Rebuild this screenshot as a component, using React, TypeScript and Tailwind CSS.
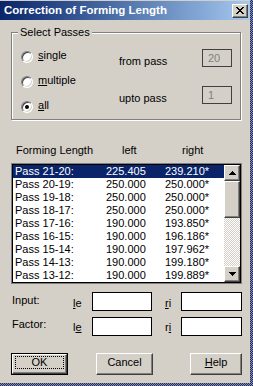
import React from "react";

const rows = [
  ["Pass 21-20:", "225.405", "239.210*"],
  ["Pass 20-19:", "250.000", "250.000*"],
  ["Pass 19-18:", "250.000", "250.000*"],
  ["Pass 18-17:", "250.000", "250.000*"],
  ["Pass 17-16:", "190.000", "193.850*"],
  ["Pass 16-15:", "190.000", "196.186*"],
  ["Pass 15-14:", "190.000", "197.962*"],
  ["Pass 14-13:", "190.000", "199.180*"],
  ["Pass 13-12:", "190.000", "199.889*"],
];

const raised =
  "bg-[#d4d0c8] border border-t-white border-l-white border-r-[#404040] border-b-[#404040] shadow-[inset_-1px_-1px_0_#808080]";

function Radio({
  pre,
  u,
  post,
  checked,
}: {
  pre: string;
  u: string;
  post: string;
  checked?: boolean;
}) {
  return (
    <div className="h-[25px] flex items-center gap-[5px]">
      <span className="mt-[2px] w-[12px] h-[12px] rounded-full bg-white border border-t-[#808080] border-l-[#808080] border-r-white border-b-white shadow-[inset_1px_1px_0_#404040,inset_-1px_-1px_0_#d4d0c8] flex items-center justify-center">
        {checked && <span className="w-[4px] h-[4px] rounded-full bg-black" />}
      </span>
      <span>
        {pre}
        <u>{u}</u>
        {post}
      </span>
    </div>
  );
}

function Arrow({ down }: { down?: boolean }) {
  // classic 7x4 scroll arrow
  const bars = [
    [3, 1],
    [2, 3],
    [1, 5],
    [0, 7],
  ];
  const list = down ? [...bars].reverse() : bars;
  return (
    <svg width="7" height="4" viewBox="0 0 7 4" shapeRendering="crispEdges">
      {list.map(([x, w], i) => (
        <rect key={i} x={x} y={i} width={w} height={1} fill="#000" />
      ))}
    </svg>
  );
}

function Edit() {
  return <div className="h-[19px] bg-white border border-black" />;
}

export default function App() {
  return (
    <div className="w-[253px] h-[386px] pr-[3px] pb-[3px] bg-[image:repeating-conic-gradient(#1c2b63_0_25%,#8c93a8_0_50%)] bg-[length:2px_2px] font-['Liberation_Sans',Arial,sans-serif] text-[11px] leading-[13px] text-black">
      <div className="h-full bg-[#d4d0c8] pt-[1px] flex flex-col">
        {/* title bar */}
        <div className="h-[19px] flex items-center bg-linear-to-r from-[#0a246a] to-[#a6caf0] pl-[4px] pr-[2px]">
          <span className="flex-1 text-white font-bold text-[11.5px]">
            Correction of Forming Length
          </span>
          <div className={`w-[16px] h-[14px] flex items-center justify-center ${raised}`}>
            <svg width="8" height="7" viewBox="0 0 8 7" shapeRendering="crispEdges">
              <rect x="0" y="0" width="2" height="1" />
              <rect x="6" y="0" width="2" height="1" />
              <rect x="1" y="1" width="2" height="1" />
              <rect x="5" y="1" width="2" height="1" />
              <rect x="2" y="2" width="4" height="1" />
              <rect x="3" y="3" width="2" height="1" />
              <rect x="2" y="4" width="4" height="1" />
              <rect x="1" y="5" width="2" height="1" />
              <rect x="5" y="5" width="2" height="1" />
              <rect x="0" y="6" width="2" height="1" />
              <rect x="6" y="6" width="2" height="1" />
            </svg>
          </div>
        </div>

        {/* Select Passes group */}
        <div className="relative ml-[11px] mt-[12px] w-[230px] h-[88px] border border-[#808080] shadow-[1px_1px_0_#fff,inset_1px_1px_0_#fff] flex">
          <span className="absolute left-[6px] top-[-7px] px-[2px] bg-[#d4d0c8]">
            Select Passes
          </span>
          <div className="w-[107px] pt-[10px] pl-[9px] flex flex-col">
            <Radio pre="" u="s" post="ingle" />
            <Radio pre="" u="m" post="ultiple" />
            <Radio pre="" u="a" post="ll" checked />
          </div>
          <div className="w-[83px] flex flex-col">
            <span className="mt-[22px]">from pass</span>
            <span className="mt-[24px]">upto pass</span>
          </div>
          <div className="flex flex-col">
            <div className="mt-[16px] w-[30px] h-[18px] border border-[#404040] pl-[5px] text-[#808080] flex items-center">
              20
            </div>
            <div className="mt-[19px] w-[30px] h-[18px] border border-[#404040] pl-[5px] text-[#808080] flex items-center">
              1
            </div>
          </div>
        </div>

        {/* column header */}
        <div className="mt-[24px] h-[13px] flex">
          <span className="pl-[16px] w-[122px]">Forming Length</span>
          <span className="w-[60px]">left</span>
          <span>right</span>
        </div>

        {/* list */}
        <div className="mt-[6px] ml-[11px] w-[231px] h-[121px] border border-[#808080]">
          <div className="h-full border border-black bg-white flex">
            <div className="flex-1 flex flex-col">
              {rows.map((r, i) => (
                <div
                  key={r[0]}
                  className={
                    i === 0
                      ? "h-[13px] flex bg-[#0a246a] text-white"
                      : "h-[13px] flex"
                  }
                >
                  <span className="pl-[2px] w-[93px]">{r[0]}</span>
                  <span className="w-[59px]">{r[1]}</span>
                  <span>{r[2]}</span>
                </div>
              ))}
            </div>
            <div className="w-[16px] flex flex-col">
              <div className={`h-[16px] flex items-center justify-center ${raised}`}>
                <Arrow />
              </div>
              <div className={`h-[37px] ${raised}`} />
              <div className="flex-1 bg-[image:repeating-conic-gradient(#d4d0c8_0_25%,#ffffff_0_50%)] bg-[length:2px_2px]" />
              <div className={`h-[16px] flex items-center justify-center ${raised}`}>
                <Arrow down />
              </div>
            </div>
          </div>
        </div>

        {/* input rows */}
        <div className="mt-[8px] h-[19px] flex items-start">
          <span className="ml-[12px] w-[61px] mt-[2px]">Input:</span>
          <span className="w-[19px] mt-[5px]">
            <u>l</u>e
          </span>
          <div className="w-[60px]">
            <Edit />
          </div>
          <span className="ml-[13px] w-[16px] mt-[5px]">
            <u>r</u>i
          </span>
          <div className="w-[61px]">
            <Edit />
          </div>
        </div>
        <div className="mt-[6px] h-[19px] flex items-start">
          <span className="ml-[12px] w-[61px] mt-[1px]">Factor:</span>
          <span className="w-[19px] mt-[4px]">
            l<u>e</u>
          </span>
          <div className="w-[60px]">
            <Edit />
          </div>
          <span className="ml-[13px] w-[16px] mt-[4px]">
            r<u>i</u>
          </span>
          <div className="w-[61px]">
            <Edit />
          </div>
        </div>

        {/* buttons */}
        <div className="mt-[17px] h-[22px] flex">
          <div className="ml-[11px] w-[57px] border border-black">
            <div className={`relative h-full flex items-center justify-center pb-[3px] ${raised}`}>
              <span className="absolute left-[2px] right-[2px] top-[1px] bottom-[4px] border border-dotted border-black" />
              OK
            </div>
          </div>
          <div className={`ml-[28px] w-[57px] flex items-center justify-center pb-[3px] ${raised}`}>
            Cancel
          </div>
          <div className={`ml-[37px] w-[52px] flex items-center justify-center pb-[3px] ${raised}`}>
            <span>
              <u>H</u>elp
            </span>
          </div>
        </div>
      </div>
    </div>
  );
}
